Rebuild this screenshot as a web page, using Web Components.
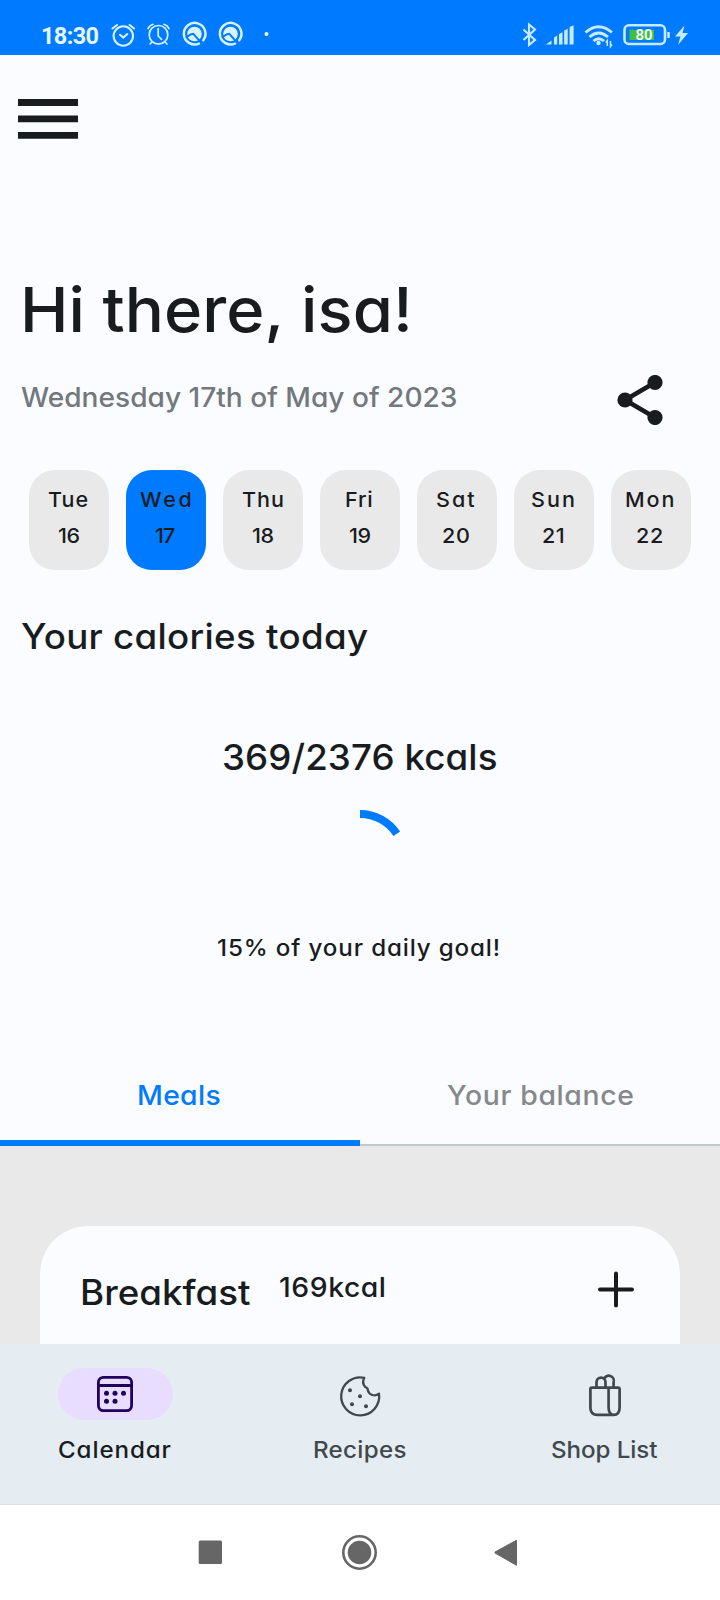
<!DOCTYPE html>
<html lang="en">
<head>
<meta charset="utf-8">
<title>Meal calendar</title>
<style>
html,body{margin:0;padding:0}
body{width:720px;height:1600px;overflow:hidden;background:#fbfcff;color:#191c1e;font-family:Inter,"Open Sans",sans-serif;font-weight:500}
</style>
</head>
<body>
<meal-app></meal-app>
<script>
const define = (name, html, setup) => {
  const template = document.createElement('template');
  template.innerHTML = html;
  customElements.define(name, class extends HTMLElement {
    connectedCallback() {
      if (this.shadowRoot) return;
      const root = this.attachShadow({mode: 'open'});
      root.append(template.content.cloneNode(true));
      if (setup) setup(this, root);
    }
  });
};

/* One line of text, slightly widened and tracked so that its glyphs span the width in "w". */
const pen = document.createElement('canvas').getContext('2d');
define('fit-text', `<style>
:host{display:block;flex:none;white-space:pre;font-feature-settings:"cv11"}
span{display:inline-block;transform-origin:0 50%}
</style><span><slot></slot></span>`, (host, root) => {
  const span = root.querySelector('span');
  const w = +host.getAttribute('w'), size = +host.getAttribute('size');
  const stretch = +(host.getAttribute('stretch') || 1.05);
  host.style.fontSize = size + 'px';
  host.style.lineHeight = host.getAttribute('line') + 'px';
  host.style.height = host.getAttribute('line') + 'px';
  host.style.width = w + 'px';
  const text = host.textContent, style = getComputedStyle(host);
  pen.font = `${style.fontWeight} ${size}px ${style.fontFamily}`;
  const before = -pen.measureText(text[0]).actualBoundingBoxLeft;
  const last = pen.measureText(text[text.length - 1]);
  const after = last.width - last.actualBoundingBoxRight;
  const natural = span.getBoundingClientRect().width;
  span.style.letterSpacing = (w / stretch + before + after - natural) / (text.length - 1) + 'px';
  span.style.marginLeft = -before * stretch + 'px';
  span.style.transform = `scaleX(${stretch})`;
});

define('status-bar', `<style>
:host{display:flex;justify-content:space-between;height:55px;background:#007aff;color:#e4f5ff;font-family:Roboto,sans-serif;font-weight:700}
.left,.right{display:flex;align-items:flex-start}
.left{padding-left:42px}
fit-text{margin-top:20.500px}
svg{display:block;flex:none}
.left svg{margin:20px 0 0 10px}
.right svg{margin-top:20px}
</style>
<div class="left"><fit-text w="56.500" size="23.500" line="30" stretch="1">18:30</fit-text>
<svg width="170" height="30" viewBox="108.500 20 170 30" fill="none" stroke="#d3f1ff" stroke-linecap="round">
<g stroke-width="2.100"><circle cx="122.800" cy="36" r="9.700"/><path d="M112 28.500l4.500-3.500M133.600 28.500l-4.500-3.500M119.500 34.800l3.300 2.800 4-3.600"/></g>
<g stroke-width="1.700"><circle cx="158" cy="34.800" r="9.300"/><path d="M147.500 28.500q1.500-3 5-4.200M168.500 28.500q-1.500-3-5-4.200M157.700 28.500v7.500l3.300 3.300M151 42.500l-1.500 1.500M165 42.500l1.500 1.500"/></g>
<g><path d="M198.500 43.600A10.800 10.800 0 1 1 202.800 40.200" stroke-width="2.500"/><circle cx="194" cy="34" r="7.300" fill="#d8f3ff" stroke="none"/><path d="M186 37l4.200-2.600 2.600-.6 7.200 8" stroke="#007aff" stroke-width="2" stroke-linejoin="round"/></g>
<g transform="translate(36 0)"><path d="M198.500 43.600A10.800 10.800 0 1 1 202.800 40.200" stroke-width="2.500"/><circle cx="194" cy="34" r="7.300" fill="#d8f3ff" stroke="none"/><path d="M186 37l4.200-2.600 2.600-.6 7.200 8" stroke="#007aff" stroke-width="2" stroke-linejoin="round"/></g>
<circle cx="266" cy="34" r="2" fill="#eefaff" stroke="none"/>
</svg></div>
<div class="right"><svg width="200" height="30" viewBox="520 20 200 30" fill="none" stroke="#c6ebff">
<path d="M523.500 29.500l11.500 10.500-6 5V24.500l6 5-11.500 10.500" stroke-width="2.100"/>
<path d="M546 44.500l5.500-4v4zM554 44.500v-7l3.200-2v9zM559 44.500v-10.500l3.500-1.800v12.300zM564.200 44.500v-14l3.500-1.800v15.800zM569.600 44.500v-17.500l4-1.800v19.300z" fill="#c6ebff" stroke="none"/>
<path d="M585.500 32.500q13-11.500 26.500 0M589.500 37q9-8 18.500 0M593.500 41q5-4.500 10.500 0" stroke-width="2.900"/>
<circle cx="598.500" cy="43" r="2.200" fill="#c6ebff" stroke="none"/><path d="M607.300 46v-5.500l-1.500 2M610.500 41v5.500l1.500-2" stroke-width="1.500"/>
<rect x="624.500" y="25.300" width="40.500" height="18.700" rx="4.500" stroke-width="2.600"/>
<rect x="629.500" y="29.700" width="24.500" height="10.300" fill="#43bd45" stroke="none"/>
<path d="M668.500 32v6" stroke-width="2.500"/>
<path d="M684.500 25.500l-9.500 11h5.500L678 45l10-12h-5.500z" fill="#c6ebff" stroke="none"/>
<text x="644" y="39.800" text-anchor="middle" font-family="Roboto,sans-serif" font-size="15" font-weight="600" fill="#f0fbff" stroke="none">80</text>
</svg></div>`);

define('menu-bar', `<style>
:host{display:block;height:205px;box-sizing:border-box;padding:44px 0 0 18px}
svg{display:block}
</style><svg width="60" height="40" fill="#191c1e"><path d="M0 0h60v7H0zM0 16.500h60v6.700H0zM0 33h60v6.700H0z"/></svg>`);

define('greeting-block', `<style>
:host{display:block;padding:9.600px 57px 0 20.500px}
.name{margin-left:3.700px}
.row{display:flex;justify-content:space-between;margin-top:25.400px;height:50px}
.date{margin-top:3px;color:#72787c}
svg{display:block}
</style>
<fit-text class="name" w="383.500" size="62" line="80">Hi there, isa!</fit-text>
<div class="row"><fit-text class="date" w="435.500" size="27" line="40" stretch="1.040">Wednesday 17th of May of 2023</fit-text>
<svg width="48" height="50" viewBox="615 375 48 50" fill="#191c1e"><path d="M655 382.500L625 400l30 17.500" fill="none" stroke="#191c1e" stroke-width="4.600"/><circle cx="625" cy="400" r="7.600"/><circle cx="655" cy="382.500" r="7.600"/><circle cx="655" cy="417.500" r="7.600"/></svg></div>`);

define('day-card', `<style>
:host{display:flex;flex-direction:column;align-items:center;box-sizing:border-box;width:80px;height:100px;padding:11px 2px 0 0;border-radius:26px;background:#e9e9e9;font-weight:450}
:host([selected]){background:#007aff}
</style><slot></slot>`);

define('day-strip', `<style>
:host{display:flex;gap:17px;margin-top:45px;padding-left:29px}
</style>`, (host, root) => {
  [['Tue',40,'16',21],['Wed',51,'17',19.5],['Thu',40.5,'18',21],['Fri',25.5,'19',21],['Sat',37.5,'20',26.5],['Sun',41.5,'21',20],['Mon',47,'22',25.5]]
  .forEach(([day, dw, date, nw], i) => {
    const card = document.createElement('day-card');
    if (i === 1) card.setAttribute('selected', '');
    card.innerHTML = `<fit-text w="${dw}" size="20.500" line="37">${day}</fit-text><fit-text w="${nw}" size="20.500" line="36">${date}</fit-text>`;
    root.append(card);
  });
});

define('calorie-summary', `<style>
:host{display:flex;flex-direction:column;align-items:center}
.title{align-self:flex-start;margin:42.300px 0 0 20.500px}
.total{margin:73px 0 0 1px;font-weight:450}
svg{display:block;margin-top:28.700px}
.goal{margin:23.600px 3px 0 0;font-weight:450}
</style>
<fit-text class="title" w="347" size="35" line="48">Your calories today</fit-text>
<fit-text class="total" w="272" size="36" line="48" stretch="1.020">369/2376 kcals</fit-text>
<svg width="96" height="96"><path d="M48 4A44 44 0 0 1 84.800 23.800" fill="none" stroke="#007aff" stroke-width="8"/></svg>
<fit-text class="goal" w="281" size="23" line="36">15% of your daily goal!</fit-text>`);

define('tab-item', `<style>
:host{display:flex;justify-content:center;box-sizing:border-box;height:86px;padding-top:16px;border-bottom:2px solid #c0c8cd;color:#86888b}
:host([selected]){border-bottom:6px solid #007aff;color:#007aff}
</style><slot></slot>`);

define('tab-bar', `<style>
:host{display:grid;grid-template-columns:1fr 1fr;margin-top:94.400px;flex:none}
</style>
<tab-item selected><fit-text w="81" size="27" line="40">Meals</fit-text></tab-item>
<tab-item><fit-text w="186" size="27" line="40">Your balance</fit-text></tab-item>`);

define('meal-list', `<style>
:host{display:block;box-sizing:border-box;height:198px;padding:80px 40px 0;background:#e9e9e9}
article{display:flex;box-sizing:border-box;height:118px;padding:41px 44px 0 42px;background:#fbfcff;border-radius:48px 48px 0 0}
.name{margin-top:1.300px}
.kcal{margin-left:30px;font-weight:450}
svg{margin:3px 0 0 auto;display:block}
</style>
<article><fit-text class="name" w="168.500" size="35" line="48">Breakfast</fit-text><fit-text class="kcal" w="104" size="27.500" line="40" stretch="1.030">169kcal</fit-text>
<svg width="40" height="40" fill="none" stroke="#191c1e" stroke-width="4" stroke-linecap="round"><path d="M20 3.500v32M4 19.500h32"/></svg></article>`);

define('nav-item', `<style>
:host{display:flex;flex-direction:column;align-items:center;padding-top:24px;color:#40484c}
:host([selected]){color:#191c1e}
.pill{display:grid;place-items:center;width:115px;height:51.600px;border-radius:26px}
:host([selected]) .pill{background:#e8ddff}
.label{margin-top:12px}
</style><div class="pill"><slot name="icon"></slot></div><div class="label"><slot></slot></div>`);

define('bottom-nav', `<style>
:host{display:grid;grid-template-columns:230px 260px 230px;height:160px;background:#e5edf3}
svg{display:block}
</style>
<nav-item selected><svg slot="icon" width="36" height="36" fill="none" stroke="#22005d" stroke-width="2.800"><rect x="1.400" y="1.400" width="33.200" height="33.200" rx="5"/><path d="M1 9.500h34"/><g fill="#22005d" stroke="none"><circle cx="9.500" cy="17.300" r="2.500"/><circle cx="18" cy="17.300" r="2.500"/><circle cx="26.500" cy="17.300" r="2.500"/><circle cx="9.500" cy="25.300" r="2.500"/><circle cx="18" cy="25.300" r="2.500"/></g></svg><fit-text w="112" size="23" line="36">Calendar</fit-text></nav-item>
<nav-item><svg slot="icon" width="40" height="44" viewBox="0 -4.200 40 44" overflow="visible" fill="none" stroke="#40484c" stroke-width="2.300" stroke-linejoin="round"><path d="M24.300 1.600A19 19 0 1 0 39 17.500a7 7 0 0 1-11.200-3.500q.3-2.300-2.600-3.200a8 8 0 0 1-.9-9.200z"/><g fill="#40484c" stroke="none"><circle cx="10" cy="14" r="2"/><circle cx="20" cy="20" r="2"/><circle cx="12" cy="28" r="2"/><circle cx="26" cy="30" r="2"/></g></svg><fit-text w="92" size="23" line="36">Recipes</fit-text></nav-item>
<nav-item><svg slot="icon" width="32" height="44" viewBox="0 -4.200 32 44" overflow="visible" fill="none" stroke="#40484c" stroke-width="2.700" stroke-linejoin="round"><path d="M2.900 11.400h26.200q1.500 0 1.500 1.500V31.500q0 7.100-6 7.100H8.400q-7 0-7-7.100V12.900q0-1.500 1.500-1.500zM19.600 11.400v20.100q0 7.100 5.500 7.100M7.500 11.400V6.200a4.500 4.800 0 0 1 9 0v5.200M15 3a4.800 4.800 0 0 1 9.600 3.200v5.200"/></svg><fit-text w="105.500" size="23" line="36">Shop List</fit-text></nav-item>`);

define('system-nav', `<style>
:host{display:flex;align-items:center;box-sizing:border-box;height:96px;border-top:1px solid #dcdfe2;background:#fff;padding-left:198px}
svg{display:block}
</style><svg width="320" height="36" viewBox="198 1534 320 36" fill="#666"><rect x="198.700" y="1540.500" width="23.300" height="23.500" rx="1.500"/><circle cx="359.500" cy="1552.500" r="11.800"/><circle cx="359.500" cy="1552.500" r="16.200" fill="none" stroke="#666" stroke-width="2.600"/><path d="M495 1552L516.500 1540.300v25L495 1553z" stroke="#666" stroke-linejoin="round"/></svg>`);

define('meal-app', `<style>
:host{display:flex;flex-direction:column;width:720px;height:1600px}
:host>*{flex:none}
</style>
<status-bar></status-bar><menu-bar></menu-bar><greeting-block></greeting-block><day-strip></day-strip>
<calorie-summary></calorie-summary><tab-bar></tab-bar><meal-list></meal-list><bottom-nav></bottom-nav><system-nav></system-nav>`);
</script>
</body>
</html>
